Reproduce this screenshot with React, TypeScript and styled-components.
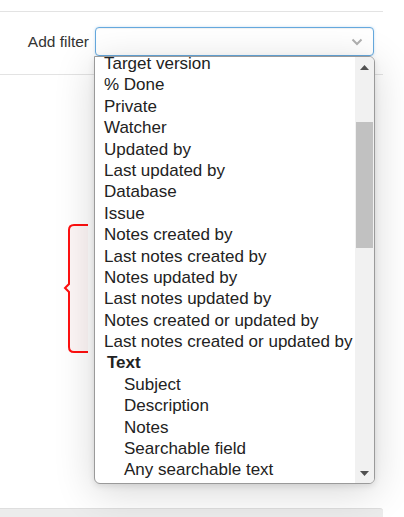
import React from "react";
import styled, { createGlobalStyle } from "styled-components";

const Global = createGlobalStyle`
  html, body { margin: 0; padding: 0; background: #ffffff; }
  body { font-family: "Liberation Sans", Arial, sans-serif; color: #222; }
`;

const Page = styled.div`
  position: relative;
  width: 404px;
  height: 517px;
  overflow: hidden;
  background: #fff;
`;

const Content = styled.div`
  width: 383px;
  display: flex;
  flex-direction: column;
`;

const Rule = styled.div<{ $top?: number }>`
  height: 0;
  border-top: 1px solid #e3e3e3;
  margin-top: ${(p) => p.$top ?? 0}px;
`;

const FilterRow = styled.div`
  display: grid;
  grid-template-columns: 89px 279px;
  column-gap: 6px;
  align-items: center;
  padding: 15px 0 18px 0;
`;

const Label = styled.label`
  text-align: right;
  font-size: 15.5px;
  color: #333;
`;

const SelectBox = styled.div`
  height: 27px;
  border: 1px solid #66a9de;
  border-radius: 4px;
  box-shadow: inset 0 1px 1px rgba(0, 0, 0, 0.06), 0 0 3px rgba(102, 169, 222, 0.35);
  display: flex;
  align-items: center;
  justify-content: flex-end;
  padding-right: 10px;
  background: #fff;
`;

const Body = styled.div`
  height: 433px;
`;

const BottomBar = styled.div`
  height: 9px;
  background: #ececec;
  border-top: 1px solid #dedede;
  border-top-right-radius: 3px;
`;

const Dropdown = styled.div`
  position: absolute;
  left: 94px;
  top: 56px;
  width: 279px;
  height: 426px;
  border: 1px solid #9a9a9a;
  border-radius: 0 6px 6px 6px;
  background: #fff;
  box-shadow: 0 8px 40px rgba(0, 0, 0, 0.16), 0 2px 6px rgba(0, 0, 0, 0.1);
  display: flex;
  overflow: hidden;
`;

const List = styled.ul`
  list-style: none;
  margin: -4px 0 0 0;
  padding: 0;
  flex: 1;
  min-width: 0;
`;

const Option = styled.li<{ $level?: number; $group?: boolean }>`
  height: 21.4px;
  line-height: 21.4px;
  font-size: 17px;
  white-space: nowrap;
  color: #222;
  padding-left: ${(p) => (p.$group ? 12 : p.$level ? 29 : 9)}px;
  font-weight: ${(p) => (p.$group ? 700 : 400)};
`;

const Scrollbar = styled.div`
  width: 19px;
  background: #f1f1f1;
  display: flex;
  flex-direction: column;
  align-items: center;
`;

const Arrow = styled.div`
  height: 20px;
  width: 100%;
  display: flex;
  align-items: center;
  justify-content: center;
`;

const Track = styled.div`
  flex: 1;
  width: 100%;
  display: flex;
  flex-direction: column;
  align-items: stretch;
  padding: 45px 1px 0 1px;
  box-sizing: border-box;
`;

const Thumb = styled.div`
  height: 126px;
  background: #c1c1c1;
`;

const Brace = styled.svg`
  position: absolute;
  left: 60px;
  top: 220px;
`;

const items: { t: string; level?: number; group?: boolean }[] = [
  { t: "Target version" },
  { t: "% Done" },
  { t: "Private" },
  { t: "Watcher" },
  { t: "Updated by" },
  { t: "Last updated by" },
  { t: "Database" },
  { t: "Issue" },
  { t: "Notes created by" },
  { t: "Last notes created by" },
  { t: "Notes updated by" },
  { t: "Last notes updated by" },
  { t: "Notes created or updated by" },
  { t: "Last notes created or updated by" },
  { t: "Text", group: true },
  { t: "Subject", level: 1 },
  { t: "Description", level: 1 },
  { t: "Notes", level: 1 },
  { t: "Searchable field", level: 1 },
  { t: "Any searchable text", level: 1 },
];

export default function App() {
  return (
    <Page>
      <Global />
      <Content>
        <Rule $top={11} />
        <FilterRow>
          <Label>Add filter</Label>
          <SelectBox>
            <svg width="12" height="8" viewBox="0 0 12 8">
              <path d="M1.5 1.5 L6 6 L10.5 1.5" fill="none" stroke="#b0b0b0" strokeWidth="2" />
            </svg>
          </SelectBox>
        </FilterRow>
        <Rule />
        <Body />
        <BottomBar />
      </Content>

      <Brace width="34" height="140" viewBox="0 0 34 140">
        <path
          d="M28 5 H14 Q9 5 9 10 V64 L5 68 L9 72 V127 Q9 132 14 132 H28 Z"
          fill="rgba(200,0,0,0.035)"
          stroke="none"
        />
        <path
          d="M28 5 H14 Q9 5 9 10 V64 L5 68 L9 72 V127 Q9 132 14 132 H28"
          fill="none"
          stroke="#ff1010"
          strokeWidth="2"
        />
      </Brace>

      <Dropdown>
        <List>
          {items.map((it) => (
            <Option key={it.t} $level={it.level} $group={it.group}>
              {it.t}
            </Option>
          ))}
        </List>
        <Scrollbar>
          <Arrow>
            <svg width="9" height="5" viewBox="0 0 9 5">
              <path d="M0 5 L4.5 0 L9 5 Z" fill="#505050" />
            </svg>
          </Arrow>
          <Track>
            <Thumb />
          </Track>
          <Arrow>
            <svg width="9" height="5" viewBox="0 0 9 5">
              <path d="M0 0 L4.5 5 L9 0 Z" fill="#505050" />
            </svg>
          </Arrow>
        </Scrollbar>
      </Dropdown>
    </Page>
  );
}
